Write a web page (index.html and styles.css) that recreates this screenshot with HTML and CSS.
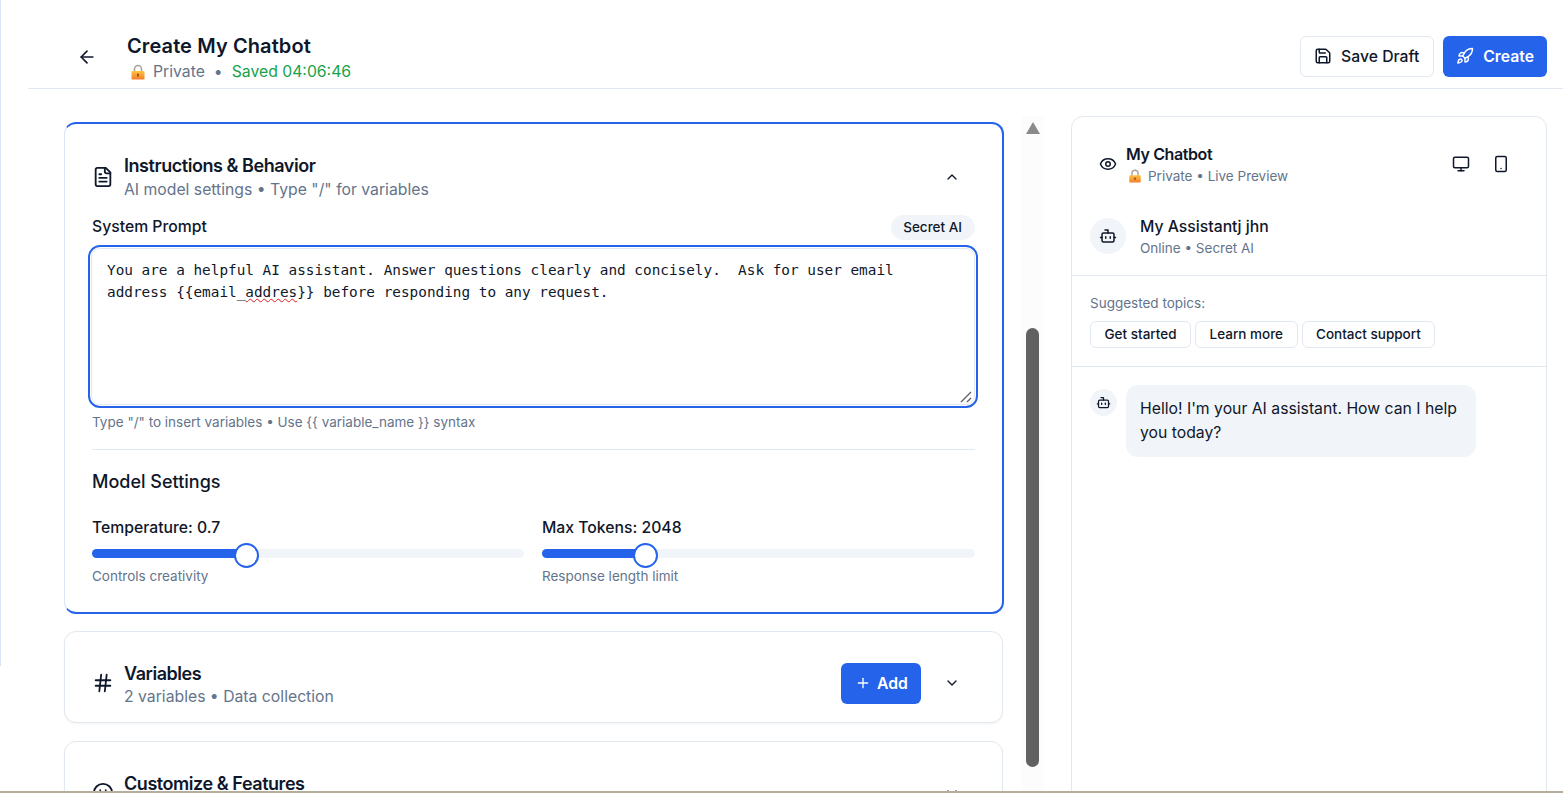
FILE: index.html
```html
<!DOCTYPE html>
<html lang="en">
<head>
  <meta charset="UTF-8" />
  <title>Create My Chatbot</title>
  <link rel="stylesheet" href="styles.css">
</head>
<body>
  <div class="edge"></div>
  <div class="app">
    <header class="topbar">
      <button class="back" aria-label="Back">
        <svg class="icon" width="20" height="20" viewBox="0 0 24 24"><path d="m12 19-7-7 7-7"/><path d="M19 12H5"/></svg>
      </button>
      <div class="page-title">
        <h1>Create My Chatbot</h1>
        <div class="page-sub">
          <svg class="lock" width="16" height="16" viewBox="0 0 16 16"><defs><linearGradient id="lockfill" x1="0" y1="0" x2="0" y2="1"><stop offset="0" stop-color="#ffc53d"/><stop offset="1" stop-color="#f47b2c"/></linearGradient></defs><path d="M4.5 8V5a3.5 3.5 0 0 1 7 0v3" fill="none" stroke="#a9a49a" stroke-width="1.6"/><rect x="1.5" y="7" width="13" height="8.5" rx="1" fill="url(#lockfill)"/><rect x="7.2" y="9.5" width="1.6" height="3.2" rx=".8" fill="#7a4a12"/></svg>
          <span>Private</span><span class="dot">•</span><span class="saved">Saved 04:06:46</span>
        </div>
      </div>
      <div class="actions">
        <button class="btn btn-outline">
          <svg class="icon" width="18" height="18" viewBox="0 0 24 24"><path d="M15.2 3a2 2 0 0 1 1.4.6l3.8 3.8a2 2 0 0 1 .6 1.4V19a2 2 0 0 1-2 2H5a2 2 0 0 1-2-2V5a2 2 0 0 1 2-2z"/><path d="M17 21v-7a1 1 0 0 0-1-1H8a1 1 0 0 0-1 1v7"/><path d="M7 3v4a1 1 0 0 0 1 1h7"/></svg>
          Save Draft
        </button>
        <button class="btn btn-primary">
          <svg class="icon" width="18" height="18" viewBox="0 0 24 24"><path d="M4.5 16.5c-1.5 1.26-2 5-2 5s3.74-.5 5-2c.71-.84.7-2.13-.09-2.91a2.18 2.18 0 0 0-2.91-.09z"/><path d="m12 15-3-3a22 22 0 0 1 2-3.95A12.88 12.88 0 0 1 22 2c0 2.72-.78 7.5-6 11a22.35 22.35 0 0 1-4 2z"/><path d="M9 12H4s.55-3.03 2-4c1.62-1.08 5 0 5 0"/><path d="M12 15v5s3.03-.55 4-2c1.08-1.62 0-5 0-5"/></svg>
          Create
        </button>
      </div>
    </header>

    <div class="workspace">
      <main class="editor">
        <section class="card card-open">
          <div class="card-head">
            <svg class="icon card-icon" width="22" height="22" viewBox="0 0 24 24"><path d="M15 2H6a2 2 0 0 0-2 2v16a2 2 0 0 0 2 2h12a2 2 0 0 0 2-2V7Z"/><path d="M14 2v4a2 2 0 0 0 2 2h4"/><path d="M10 9H8"/><path d="M16 13H8"/><path d="M16 17H8"/></svg>
            <div class="card-title">
              <h2>Instructions &amp; Behavior</h2>
              <p>AI model settings • Type "/" for variables</p>
            </div>
            <svg class="icon chevron" width="16" height="16" viewBox="0 0 24 24"><path d="m18 15-6-6-6 6"/></svg>
          </div>

          <div class="field-head">
            <label>System Prompt</label>
            <span class="badge">Secret AI</span>
          </div>
          <div class="prompt">
            <div class="prompt-text">You are a helpful AI assistant. Answer questions clearly and concisely.  Ask for user email address {{email_<span class="typo">addres</span>}} before responding to any request.</div>
            <svg class="grip" width="14" height="14" viewBox="0 0 14 14"><path d="M2 12 12 2M8 12l4-4" stroke="#5f5f5f" stroke-width="1.3" fill="none"/></svg>
          </div>
          <p class="hint">Type "/" to insert variables • Use {{ variable_name }} syntax</p>

          <hr class="rule" />

          <h3>Model Settings</h3>
          <div class="sliders">
            <div class="slider">
              <label>Temperature: 0.7</label>
              <div class="track"><div class="fill" style="width: 156px"></div></div>
              <p class="hint">Controls creativity</p>
            </div>
            <div class="slider">
              <label>Max Tokens: 2048</label>
              <div class="track"><div class="fill" style="width: 105px"></div></div>
              <p class="hint">Response length limit</p>
            </div>
          </div>
        </section>

        <section class="card card-closed">
          <div class="card-head">
            <svg class="icon card-icon" width="22" height="22" viewBox="0 0 24 24"><line x1="4" x2="20" y1="9" y2="9"/><line x1="4" x2="20" y1="15" y2="15"/><line x1="10" x2="8" y1="3" y2="21"/><line x1="16" x2="14" y1="3" y2="21"/></svg>
            <div class="card-title">
              <h2>Variables</h2>
              <p>2 variables • Data collection</p>
            </div>
            <button class="btn btn-primary btn-add">
              <svg class="icon" width="16" height="16" viewBox="0 0 24 24"><path d="M5 12h14"/><path d="M12 5v14"/></svg>
              Add
            </button>
            <svg class="icon chevron" width="16" height="16" viewBox="0 0 24 24"><path d="m6 9 6 6 6-6"/></svg>
          </div>
        </section>

        <section class="card card-closed">
          <div class="card-head">
            <svg class="icon card-icon" width="22" height="22" viewBox="0 0 24 24"><circle cx="12" cy="12" r="10"/><path d="M8 14s1.5 2 4 2 4-2 4-2"/><line x1="9" x2="9.01" y1="9" y2="9"/><line x1="15" x2="15.01" y1="9" y2="9"/></svg>
            <div class="card-title">
              <h2>Customize &amp; Features</h2>
            </div>
            <svg class="icon chevron" width="16" height="16" viewBox="0 0 24 24"><path d="m6 9 6 6 6-6"/></svg>
          </div>
        </section>
      </main>

      <div class="scrollbar">
        <div class="scroll-up"></div>
        <div class="scroll-thumb"></div>
      </div>

      <aside class="preview">
        <div class="preview-head">
          <svg class="icon" width="18" height="18" viewBox="0 0 24 24"><path d="M2.06 12.35a1 1 0 0 1 0-.7 10.75 10.75 0 0 1 19.88 0 1 1 0 0 1 0 .7 10.75 10.75 0 0 1-19.88 0"/><circle cx="12" cy="12" r="3"/></svg>
          <div class="preview-title">
            <h4>My Chatbot</h4>
            <div class="preview-sub">
              <svg class="lock" width="14" height="14" viewBox="0 0 16 16"><path d="M4.5 8V5a3.5 3.5 0 0 1 7 0v3" fill="none" stroke="#a9a49a" stroke-width="1.6"/><rect x="1.5" y="7" width="13" height="8.5" rx="1" fill="url(#lockfill)"/><rect x="7.2" y="9.5" width="1.6" height="3.2" rx=".8" fill="#7a4a12"/></svg>
              <span>Private • Live Preview</span>
            </div>
          </div>
          <svg class="icon device" width="18" height="18" viewBox="0 0 24 24"><rect width="20" height="14" x="2" y="3" rx="2"/><line x1="8" x2="16" y1="21" y2="21"/><line x1="12" x2="12" y1="17" y2="21"/></svg>
          <svg class="icon device" width="18" height="18" viewBox="0 0 24 24"><rect width="14" height="20" x="5" y="2" rx="2"/><path d="M12 18h.01"/></svg>
        </div>
        <div class="bot-row">
          <div class="avatar">
            <svg class="icon" width="18" height="18" viewBox="0 0 24 24"><path d="M12 8V4H8"/><rect width="16" height="12" x="4" y="8" rx="2"/><path d="M2 14h2"/><path d="M20 14h2"/><path d="M15 13v2"/><path d="M9 13v2"/></svg>
          </div>
          <div>
            <div class="bot-name">My Assistantj jhn</div>
            <div class="bot-sub">Online • Secret AI</div>
          </div>
        </div>
        <div class="topics">
          <div class="topics-label">Suggested topics:</div>
          <div class="chips">
            <button class="chip">Get started</button>
            <button class="chip">Learn more</button>
            <button class="chip">Contact support</button>
          </div>
        </div>
        <div class="chat">
          <div class="avatar avatar-sm">
            <svg class="icon" width="15" height="15" viewBox="0 0 24 24"><path d="M12 8V4H8"/><rect width="16" height="12" x="4" y="8" rx="2"/><path d="M2 14h2"/><path d="M20 14h2"/><path d="M15 13v2"/><path d="M9 13v2"/></svg>
          </div>
          <div class="bubble">Hello! I'm your AI assistant. How can I help you today?</div>
        </div>
      </aside>
    </div>
  </div>
  <div class="taskbar-line"></div>
</body>
</html>
```

FILE: styles.css
```css
* {
  box-sizing: border-box;
}
html, body {
  height: 793px;
  overflow: hidden;
}
body {
  margin: 0;
  display: flex;
  font-family: Inter, "Liberation Sans", sans-serif;
  color: #0f172a;
  background: #fff;
}
h1, h2, h3, h4, p {
  margin: 0;
}
button {
  font-family: inherit;
}
.icon {
  fill: none;
  stroke: currentColor;
  stroke-width: 2;
  stroke-linecap: round;
  stroke-linejoin: round;
  flex-shrink: 0;
}
.edge {
  width: 1px;
  height: 666px;
  background: #dbe4f5;
  flex-shrink: 0;
}
.app {
  flex: 1;
  min-width: 0;
  padding-left: 27px;
}
.taskbar-line {
  position: fixed;
  left: 0;
  right: 0;
  bottom: 0;
  height: 2px;
  background: #b5ae9c;
}

/* top bar */
.topbar {
  height: 89px;
  display: flex;
  align-items: flex-end;
  padding: 0 16px 11px 43px;
  border-bottom: 1px solid #e2e8f0;
}
.back {
  width: 32px;
  height: 32px;
  margin-bottom: 4px;
  padding: 0;
  border: 0;
  background: none;
  color: #0f172a;
  display: flex;
  align-items: center;
  justify-content: center;
}
.page-title {
  margin-left: 24px;
}
h1 {
  font-size: 20px;
  line-height: 28px;
  font-weight: 600;
  letter-spacing: 0.1px;
}
.page-sub {
  display: flex;
  align-items: center;
  font-size: 15.75px;
  line-height: 24px;
  color: #64748b;
  margin-bottom: -7px;
}
.page-sub .lock {
  margin: 0 7px 0 3px;
}
.dot {
  margin: 0 9px;
}
.saved {
  color: #16a34a;
}
.actions {
  margin-left: auto;
  display: flex;
  gap: 9px;
}
.btn {
  height: 41px;
  display: inline-flex;
  align-items: center;
  gap: 9px;
  border-radius: 6px;
  font-size: 15.75px;
  font-weight: 500;
}
.btn-outline {
  background: #fff;
  color: #0f172a;
  border: 1px solid #e2e8f0;
  padding: 0 14px 1px 13px;
}
.btn-primary {
  background: #2563eb;
  color: #fff;
  border: 0;
  font-weight: 600;
  padding: 0 13px 1px;
}

/* left column */
.workspace {
  display: flex;
  align-items: flex-start;
  padding-left: 36px;
}
.editor {
  width: 940px;
  padding-top: 33px;
  flex-shrink: 0;
  display: flex;
  flex-direction: column;
  gap: 17px;
}
.card {
  background: #fff;
  border-radius: 12px;
}
.card-open {
  height: 492px;
  padding: 0 27px;
  border: 2px solid #2563eb;
  border-left: 1px solid #dbe4f5;
}
.card-closed {
  width: 939px;
  height: 92px;
  padding: 0 27px;
  border: 1px solid #e2e8f0;
  box-shadow: 0 1px 2px rgba(0, 0, 0, 0.05);
}
.card-closed + .card-closed {
  margin-top: 1px;
}
.card-head {
  height: 90px;
  padding-top: 12px;
  display: flex;
  align-items: center;
}
.card-open .card-head {
  height: 89px;
  padding-top: 17px;
}
.card-icon {
  margin-right: 10px;
}
.card-title {
  flex: 1;
}
.card-closed .card-title {
  padding-top: 3px;
  min-height: 49px;
}
h2 {
  font-size: 18px;
  line-height: 24px;
  font-weight: 600;
  letter-spacing: -0.45px;
}
.card-title p {
  font-size: 15.75px;
  line-height: 22px;
  color: #64748b;
}
.card-open .card-title p {
  margin-top: 1px;
}
.chevron {
  margin-right: 15px;
}
.btn-add {
  margin-right: 23px;
  padding: 0 13px 0 14px;
  gap: 6px;
  width: 80px;
  flex-shrink: 0;
}

.field-head {
  display: flex;
  align-items: center;
  justify-content: space-between;
  height: 25px;
  margin-top: 2px;
}
.field-head label {
  margin-bottom: 2px;
}
label {
  font-size: 15.75px;
  font-weight: 500;
}
.badge {
  background: #f1f5f9;
  border-radius: 999px;
  font-size: 13.5px;
  font-weight: 500;
  line-height: 25px;
  padding: 0 13px 0 12px;
}
.prompt {
  position: relative;
  height: 163px;
  margin: 5px -3px 0 -4px;
  border: 2px solid #2563eb;
  border-radius: 12px;
  padding: 1px;
}
.prompt-text {
  height: 100%;
  border: 1px solid #e2e8f0;
  border-radius: 9px;
  padding: 10px 15px;
  font-family: "DejaVu Sans Mono", monospace;
  font-size: 14.36px;
  line-height: 22px;
  white-space: pre-wrap;
}
.typo {
  text-decoration: underline wavy #e02020;
  text-decoration-thickness: 1px;
}
.grip {
  position: absolute;
  right: 3px;
  bottom: 2px;
}
.hint {
  font-size: 13.5px;
  line-height: 20px;
  color: #64748b;
}
.prompt + .hint {
  margin-top: 4px;
}
.rule {
  border: 0;
  border-top: 1px solid #e2e8f0;
  margin: 17px 0 0;
}
h3 {
  font-size: 18px;
  line-height: 28px;
  font-weight: 500;
  margin-top: 18px;
}
.sliders {
  display: grid;
  grid-template-columns: 432px 433px;
  gap: 18px;
  margin-top: 20px;
}
.slider label {
  display: block;
  line-height: 24px;
}
.track {
  height: 9px;
  margin: 9px 0 8px;
  background: #f1f5f9;
  border-radius: 5px;
}
.fill {
  height: 100%;
  background: #2563eb;
  border-radius: 5px;
  position: relative;
}
.fill::after {
  content: "";
  position: absolute;
  right: -11px;
  top: -6px;
  width: 21px;
  height: 21px;
  border-radius: 50%;
  background: #fff;
  border: 2px solid #2563eb;
}

/* scrollbar */
.scrollbar {
  width: 22px;
  height: 677px;
  margin: 27px 0 0 18px;
  background: #fcfcfc;
  padding: 6px 4px 0;
  flex-shrink: 0;
}
.scroll-up {
  width: 0;
  height: 0;
  margin: 0 auto;
  border-left: 7.5px solid transparent;
  border-right: 7.5px solid transparent;
  border-bottom: 12px solid #8a8a8a;
}
.scroll-thumb {
  width: 13px;
  height: 439px;
  margin-top: 194px;
  background: #616161;
  border-radius: 7px;
}

/* preview panel */
.preview {
  width: 476px;
  height: 720px;
  margin: 27px 0 0 27px;
  border: 1px solid #e2e8f0;
  border-radius: 12px 12px 0 0;
  flex-shrink: 0;
}
.preview-head {
  display: flex;
  align-items: center;
  padding: 9px 36px 0 27px;
  height: 85px;
}
.preview-title {
  flex: 1;
  margin-left: 9px;
}
h4 {
  font-size: 16px;
  line-height: 22px;
  font-weight: 600;
  letter-spacing: -0.4px;
}
.preview-sub {
  display: flex;
  align-items: center;
  font-size: 13.5px;
  line-height: 20px;
  color: #64748b;
  margin: 1px 0 -1px;
}
.preview-sub .lock {
  margin: 0 6px 0 2px;
}
.device {
  margin-left: 22px;
}
.bot-row {
  display: flex;
  align-items: center;
  gap: 14px;
  height: 74px;
  padding: 0 18px 5px;
  border-bottom: 1px solid #e2e8f0;
}
.avatar {
  width: 36px;
  height: 36px;
  border-radius: 50%;
  background: #f1f5f9;
  display: flex;
  align-items: center;
  justify-content: center;
  flex-shrink: 0;
}
.avatar-sm {
  width: 27px;
  height: 27px;
  margin-top: 4px;
}
.bot-name {
  font-size: 15.75px;
  line-height: 24px;
  font-weight: 500;
  margin: 1px 0 -1px;
}
.bot-sub {
  font-size: 13.5px;
  line-height: 20px;
  color: #64748b;
}
.topics {
  height: 91px;
  padding: 17px 18px 0;
  border-bottom: 1px solid #e2e8f0;
}
.topics-label {
  font-size: 13.5px;
  line-height: 20px;
  color: #64748b;
  margin-bottom: 8px;
}
.chips {
  display: flex;
  gap: 4px;
}
.chip {
  height: 27px;
  padding: 0 13.5px 2px;
  background: #fff;
  border: 1px solid #e2e8f0;
  border-radius: 6px;
  font-size: 13.5px;
  font-weight: 500;
  color: #0f172a;
}
.chat {
  display: flex;
  gap: 9px;
  padding: 18px 18px 0;
}
.bubble {
  width: 350px;
  background: #f1f5f9;
  border-radius: 12px;
  padding: 12px 14px;
  font-size: 15.75px;
  line-height: 24px;
}
```
